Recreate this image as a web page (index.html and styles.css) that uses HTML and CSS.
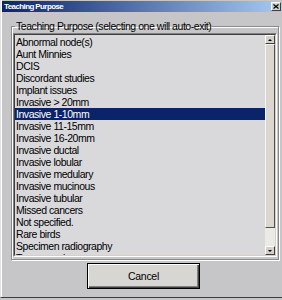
FILE: index.html
```html
<!DOCTYPE html>
<html lang="en">
<head>
    <meta charset="UTF-8">
    <title>Teaching Purpose</title>
    <link rel="stylesheet" href="styles.css">
</head>
<body>
    <div class="window">
        <div class="titlebar">
            <span class="title">Teaching Purpose</span>
            <span class="close">
                <svg width="6" height="5" viewBox="0 0 6 5"><path d="M0.5 0.5 L5.5 4.5 M5.5 0.5 L0.5 4.5" stroke="#000" stroke-width="1.2"/></svg>
            </span>
        </div>

        <fieldset class="group">
            <legend>Teaching Purpose (selecting one will auto-exit)</legend>
            <div class="listbox">
                <div class="listbox-inner">
                    <ul class="items">
                        <li>Abnormal node(s)</li>
                        <li>Aunt Minnies</li>
                        <li>DCIS</li>
                        <li>Discordant studies</li>
                        <li>Implant issues</li>
                        <li>Invasive &gt; 20mm</li>
                        <li class="selected">Invasive 1-10mm</li>
                        <li>Invasive 11-15mm</li>
                        <li>Invasive 16-20mm</li>
                        <li>Invasive ductal</li>
                        <li>Invasive lobular</li>
                        <li>Invasive medulary</li>
                        <li>Invasive mucinous</li>
                        <li>Invasive tubular</li>
                        <li>Missed cancers</li>
                        <li>Not specified.</li>
                        <li>Rare birds</li>
                        <li>Specimen radiography</li>
                        <li>Tumor markers</li>
                    </ul>
                    <div class="scrollbar">
                        <div class="sb-btn"><span class="arrow-up"></span></div>
                        <div class="sb-thumb"></div>
                        <div class="sb-track"></div>
                        <div class="sb-btn"><span class="arrow-down"></span></div>
                    </div>
                </div>
            </div>
        </fieldset>

        <div class="actions">
            <button class="btn-default">Cancel</button>
        </div>
    </div>
</body>
</html>
```

FILE: styles.css
```css
body { margin: 0; width: 282px; height: 300px; overflow: hidden; background: #c6c6c8; font-family: "Liberation Sans", Arial, sans-serif; }

.window {
    height: 297px;
    border-left: 1px solid #e2e2e2;
    border-bottom: 1px solid #3c3c3c;
    box-shadow: inset 1px 0 0 #fff;
    overflow: hidden;
}

.titlebar {
    display: flex;
    align-items: center;
    justify-content: space-between;
    height: 11px;
    margin: 1px 0 0 1px;
    background: linear-gradient(to right, #0a246a, #a6caf0);
}
.title {
    padding-left: 2px;
    color: #fff;
    font-weight: bold;
    font-size: 8px;
    line-height: 11px;
    letter-spacing: -0.6px;
}
.close {
    display: flex;
    align-items: center;
    justify-content: center;
    width: 8px;
    height: 7px;
    margin-right: 1px;
    background: #d4d0c8;
    border: 1px solid;
    border-color: #fff #404040 #404040 #fff;
}

.group {
    margin: 8px 3px 0 10px;
    padding: 0 1px 2px 1px;
    border: 1px solid #8a8a8a;
    box-shadow: 1px 1px 0 #fff, inset 1px 1px 0 #fff;
    min-width: 0;
}
.group legend {
    margin-left: 2px;
    padding: 0 1px;
    font-size: 10.5px;
    line-height: 12px;
    letter-spacing: -0.45px;
    color: #000;
}

.listbox {
    height: 222px;
    margin-top: 1px;
    border: 1px solid;
    border-color: #808080 #fff #fff #808080;
}
.listbox-inner {
    display: flex;
    height: 220px;
    border: 1px solid;
    border-color: #404040 #d4d0c8 #d4d0c8 #404040;
    background: #d9d9dc;
}

.items {
    flex: 1;
    margin: 0;
    padding: 1px 0 0;
    list-style: none;
    overflow: hidden;
}
.items li {
    padding-left: 1px;
    font-size: 10.5px;
    line-height: 12px;
    height: 12px;
    letter-spacing: -0.45px;
    color: #000;
    white-space: nowrap;
}
.items li.selected { background: #0a246a; color: #fff; }

.scrollbar {
    display: flex;
    flex-direction: column;
    width: 10px;
}
.sb-btn {
    display: flex;
    align-items: center;
    justify-content: center;
    height: 7px;
    background: #d4d0c8;
    border: 1px solid;
    border-color: #fff #404040 #404040 #fff;
}
.arrow-up { width: 0; height: 0; border: 2px solid transparent; border-top: 0; border-bottom: 2px solid #000; }
.arrow-down { width: 0; height: 0; border: 2px solid transparent; border-bottom: 0; border-top: 2px solid #000; }
.sb-thumb {
    height: 182px;
    background: #dbd7cf;
    border: 1px solid;
    border-color: #f4f4f0 #505050 #505050 #f4f4f0;
}
.sb-track { flex: 1; background: #eceae6; }

.actions { padding: 3px 0 0 86px; }
.btn-default {
    width: 113px;
    height: 26px;
    padding: 0;
    border: 1px solid #000;
    background: #d8d6d2;
    box-shadow: inset 1px 1px 0 #fff, inset -1px -1px 0 #404040, inset -2px -2px 0 #808080;
    font-family: "Liberation Sans", Arial, sans-serif;
    font-size: 10.5px;
    letter-spacing: -0.3px;
    color: #000;
}
```
